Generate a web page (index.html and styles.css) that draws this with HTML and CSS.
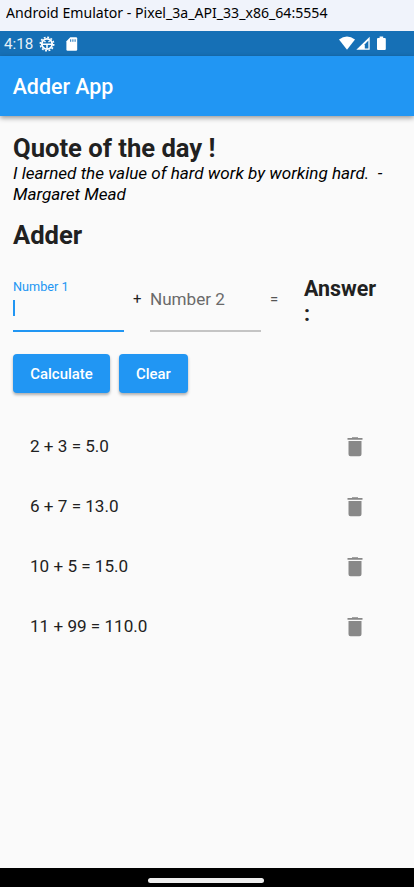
FILE: index.html
```html
<!DOCTYPE html>
<html lang="en">
<head>
<meta charset="utf-8">
<title>Adder App</title>
<link rel="stylesheet" href="styles.css">
</head>
<body>
<svg width="0" height="0" class="defs"><defs>
<symbol id="trash" viewBox="0 0 16 20"><path d="M5 1V.2h6V1h4.500v1.700H.5V1zM1.500 4h13v13.300a2 2 0 0 1-2 2h-9a2 2 0 0 1-2-2z"/></symbol>
</defs></svg>
<div class="window-title"><span>Android Emulator - Pixel_3a_API_33_x86_64:5554</span></div>
<div class="status">
  <span class="clock">4:18</span>
  <svg class="gear" width="16" height="16" viewBox="0 0 16 16" fill="none" stroke="#fff"><circle cx="8" cy="8" r="5.200" stroke-width="1.800"/><circle cx="8" cy="8" r="6.700" stroke-width="1.600" stroke-dasharray="1.900 1.608"/><path d="M3 8.200h10M8 8v5" stroke-width="1.500"/><path d="M5.300 4.800l1.200 1.400M10.700 4.800L9.500 6.200" stroke-width="1.300"/></svg>
  <svg class="sd" width="12" height="14" viewBox="0 0 12 14"><path d="M4.300 .2H10A1.200 1.200 0 0 1 11.200 1.400V12.500A1.200 1.200 0 0 1 10 13.700H1.600A1.200 1.200 0 0 1 .4 12.500V4.200z" fill="#fff"/><path d="M4.700 2.300v2.500M6.900 2.300v2.500M9.100 2.300v2.500" stroke="#1670b6" stroke-width="1"/></svg>
  <svg class="signals" width="48" height="15" viewBox="0 0 48 15" fill="#fff"><path d="M0 3.600Q8 -2.400 16 3.600L8 13.800z"/><path d="M30.700 .8V13.800H17.300z"/><path d="M29.400 4.600v7.800h-3.600V8.200z" fill="#1670b6"/><path d="M40.600 .5h3.600V2h1.600a1 1 0 0 1 1 1v10a1 1 0 0 1-1 1h-6.800a1 1 0 0 1-1-1V3a1 1 0 0 1 1-1h1.600z"/></svg>
</div>
<header class="appbar">Adder App</header>
<main>
  <h1>Quote of the day !</h1>
  <p class="quote">I learned the value of hard work by working hard.&nbsp; -<br>Margaret Mead</p>
  <h1 class="adder">Adder</h1>
  <div class="form">
    <div class="field active"><label>Number 1</label><i class="caret"></i></div>
    <span class="op">+</span>
    <div class="field"><span class="hint">Number 2</span></div>
    <span class="op equals">=</span>
    <div class="answer">Answer<br>:</div>
  </div>
  <div class="buttons"><button class="calc">Calculate</button><button class="clear">Clear</button></div>
  <ul>
    <li><span>2 + 3 = 5.0</span><svg class="trash"><use href="#trash"/></svg></li>
    <li><span>6 + 7 = 13.0</span><svg class="trash"><use href="#trash"/></svg></li>
    <li><span>10 + 5 = 15.0</span><svg class="trash"><use href="#trash"/></svg></li>
    <li><span>11 + 99 = 110.0</span><svg class="trash"><use href="#trash"/></svg></li>
  </ul>
</main>
<footer><div class="pill"></div></footer>
</body>
</html>
```
FILE: styles.css
```css
* { box-sizing: border-box; }
body { margin: 0; width: 414px; height: 887px; overflow: hidden; background: #fafafa; font-family: Roboto, sans-serif; color: #212121; display: flex; flex-direction: column; }
.defs { position: absolute; }
.window-title { height: 31px; flex: none; background: #f0f3fb; color: #000; font: 14.7px/25px "Noto Sans", sans-serif; padding-left: 6px; white-space: nowrap; }
.window-title span { display: inline-block; transform: scaleX(.96); transform-origin: 0 50%; }
.status { height: 25px; flex: none; background: #1670b6; color: #e8f1f8; display: flex; align-items: center; padding-left: 4px; }
.clock { font-size: 15.2px; line-height: 25px; width: 35px; padding-top: 1px; }
.gear { margin-left: 0; }
.sd { margin-left: 11px; }
.signals { margin-left: 261px; }
.appbar { height: 60px; flex: none; background: #2196f3; color: #fff; font-size: 21.4px; font-weight: 500; line-height: 62px; padding-left: 12.7px; box-shadow: 0 2px 5px rgba(0,0,0,.4); }
main { flex: 1; padding: 17px 13px 0; }
h1 { margin: 0; font-size: 25.6px; line-height: 30px; font-weight: 700; white-space: nowrap; }
.quote { margin: 0; color: #000; font-size: 17.1px; line-height: 20.5px; font-style: italic; white-space: nowrap; }
.adder { margin-top: 16px; }
.form { display: flex; margin-top: 21px; height: 61px; }
.field { width: 111px; height: 61px; border-bottom: 2px solid #c4c4c4; display: flex; flex-direction: column; }
.active { border-bottom-color: #2196f3; }
label { font-size: 12.7px; line-height: 16px; color: #2196f3; margin-top: 8px; }
.caret { width: 2px; height: 16px; background: #2196f3; margin-top: 5px; }
.hint { font-size: 17.1px; line-height: 20px; color: #6a6a6a; margin-top: 18px; }
.op { width: 26px; font-size: 14.9px; line-height: 20px; padding: 18px 0 0 9px; }
.equals { color: #555; }
.answer { padding: 5px 0 0 17px; font-size: 21.4px; font-weight: 700; line-height: 25px; }
.buttons { display: flex; gap: 9px; margin-top: 22px; }
button { border: 0; height: 39px; border-radius: 4px; background: #2196f3; color: #fff; font: 500 14.9px Roboto, sans-serif; padding: 0; box-shadow: 0 2px 3px rgba(0,0,0,.3); }
.calc { width: 97px; }
.clear { width: 69px; }
ul { list-style: none; margin: 23px 0 0; padding: 0; }
li { display: flex; align-items: center; justify-content: space-between; height: 60px; padding: 0 38px 0 17px; font-size: 17.1px; }
li span { line-height: 20px; }
.trash { width: 16px; height: 20px; fill: #888; margin-top: 1px; }
footer { height: 19px; flex: none; background: #000; padding-top: 10px; }
.pill { width: 116px; height: 5px; border-radius: 3px; background: #eee; margin-left: 148px; }
```
